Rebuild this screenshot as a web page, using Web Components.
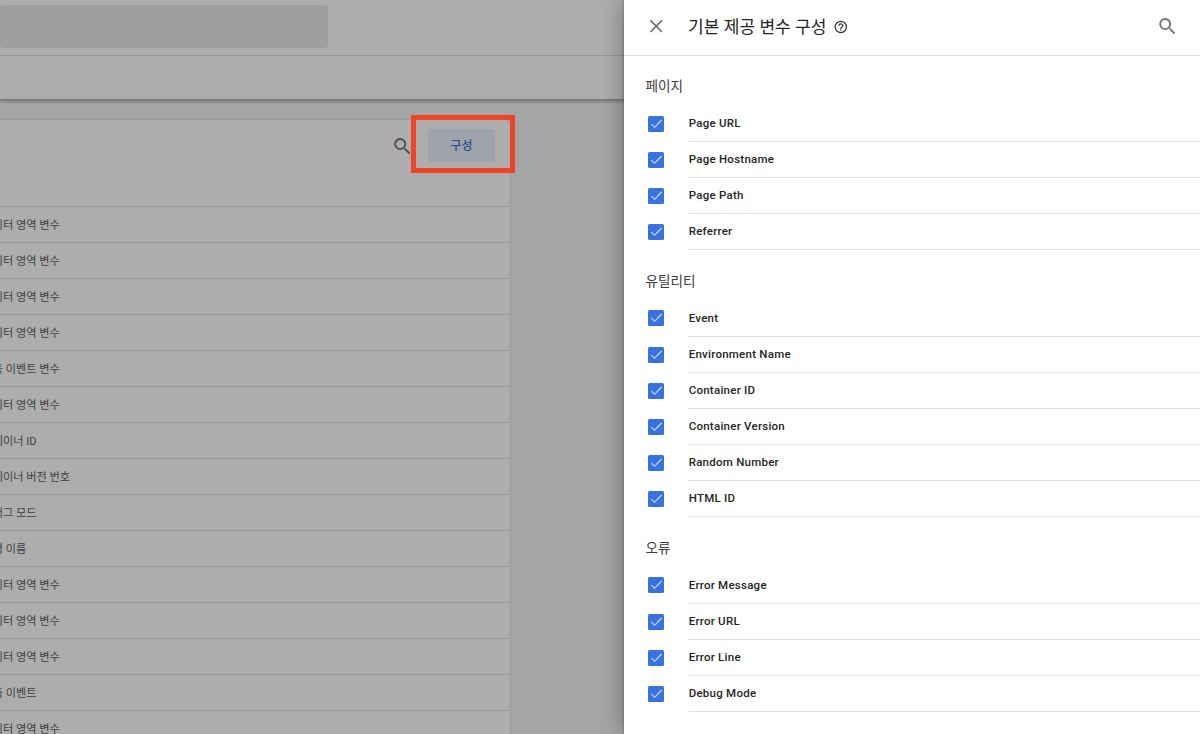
<!DOCTYPE html>
<html lang="ko">
<head>
<meta charset="utf-8">
<title>기본 제공 변수 구성</title>
<style>
html,body{margin:0;height:100%;overflow:hidden}
body{font-family:Roboto,"Noto Sans CJK KR",sans-serif;background:#a3a5a7}
</style>
</head>
<body>
<tag-app></tag-app>
<script>
const define=(name,html,setup)=>{
  const t=document.createElement('template');
  t.innerHTML=html;
  customElements.define(name,class extends HTMLElement{
    constructor(){
      super();
      this.attachShadow({mode:'open'}).append(t.content.cloneNode(true));
      if(setup)setup(this,this.shadowRoot);
    }
  });
};

define('search-icon',`
<style>:host{display:block;width:22px;height:22px}svg{display:block;width:100%;height:100%}</style>
<svg viewBox="-.5 -.4 24 24"><path fill="currentColor" d="M15.5 14h-.79l-.28-.27A6.47 6.47 0 0 0 16 9.5 6.5 6.5 0 1 0 9.5 16c1.61 0 3.09-.59 4.23-1.57l.27.28v.79l5 4.99L20.49 19l-4.99-5zm-6 0a4.5 4.5 0 1 1 0-9 4.5 4.5 0 0 1 0 9z"/></svg>`);

define('close-icon',`
<style>:host{display:block;width:14px;height:14px}svg{display:block}</style>
<svg width="14" height="14" viewBox="-.2 -.2 14 14"><path d="M1.2 1.2l11.6 11.6M12.8 1.2L1.2 12.8" stroke="#6b6b6b" stroke-width="1.6" fill="none"/></svg>`);

define('help-icon',`
<style>:host{display:block;width:15px;height:15px}svg{display:block;width:100%;height:100%}</style>
<svg viewBox="-.5 -.8 24 24"><path fill="#333" d="M11 18h2v-2h-2v2zm1-16a10 10 0 1 0 0 20 10 10 0 0 0 0-20zm0 18a8 8 0 1 1 0-16 8 8 0 0 1 0 16zm0-14a4 4 0 0 0-4 4h2a2 2 0 1 1 4 0c0 2-3 1.75-3 5h2c0-2.25 3-2.5 3-5a4 4 0 0 0-4-4z"/></svg>`);

define('check-box',`
<style>:host{display:block;width:16px;height:16px;border-radius:1.5px;background:#3871e0}svg{display:block}</style>
<svg width="16" height="16" viewBox="0 0 16 16"><path d="M3.4 8.1l3.2 3.2 7-7.3" stroke="#d3e0fa" stroke-width="1.15" fill="none"/></svg>`);

define('variable-option',`
<style>
:host{display:flex;height:36px;box-sizing:border-box;padding-left:24px}
check-box{margin:var(--check-top,10px) 24.7px 0 0}
.label{flex:1;border-bottom:1px solid #dfdfdf;font-size:11.5px;font-weight:500;letter-spacing:.25px;line-height:34px;color:#252525;white-space:nowrap}
</style>
<check-box></check-box><div class="label"><slot></slot></div>`);

define('option-group',`
<style>
:host{display:block}
h3{margin:0;height:var(--heading-height,51px);box-sizing:border-box;padding:var(--heading-top,21px) 0 0 21.5px;font-size:13.6px;line-height:20px;font-weight:400;color:#3c3c3c}
::slotted(.lead){--check-top:9px}
</style>
<h3><slot name="title"></slot></h3><slot></slot>`);

define('side-panel',`
<style>
:host{display:block;width:576px;height:100%;background:#fff;box-shadow:0 0 2px rgba(0,0,0,.35),-2px 0 20px rgba(0,0,0,.3)}
header{display:flex;align-items:center;height:56px;box-sizing:border-box;border-bottom:1px solid #dfdfdf;padding:0 22px 3px 25px}
h2{margin:2px 6px 0 25px;font-size:17.1px;line-height:24px;font-weight:400;color:#252525;white-space:nowrap}
search-icon{margin-left:auto;color:#757575}
</style>
<header><close-icon></close-icon><h2><slot name="title"></slot></h2><help-icon></help-icon><search-icon></search-icon></header>
<slot></slot>`);

define('variable-row',`
<style>
:host{display:block;height:36px;box-sizing:border-box;border-top:1px solid #989898;padding-left:3.4px;font-size:11.15px;line-height:37px;color:#3d3f41;white-space:nowrap}
</style><slot></slot>`);

define('top-bars',`
<style>
:host{display:block;height:99px;position:relative;background:#adadad;box-shadow:0 1px 1px #777a78,0 2px 4px rgba(0,0,0,.36)}
.first{height:56px;box-sizing:border-box;border-bottom:1px solid #989898;padding-top:5px}
.search{width:328px;height:43px;border-radius:4px;background:#9d9fa0}
</style>
<div class="first"><div class="search"></div></div>`);

define('config-button',`
<style>
:host{display:block;position:relative;width:67px;height:33px;border-radius:3px;background:#9fa4ac;color:#2c4c8c;font-size:12px;font-weight:500;line-height:35px;text-align:center}
.mark{position:absolute;left:-17.5px;top:-14px;width:94.5px;height:47.5px;border:5px solid #ee4326}
</style>
<slot></slot><div class="mark"></div>`);

define('variable-card',`
<style>
:host{display:block;width:533px;box-sizing:border-box;margin:20px 0 0 -22px;height:700px;border:1px solid #989a9c;border-radius:0 7px 0 0;background:#adadad}
.bar{display:flex;height:86px;box-sizing:border-box;padding:9px 15px 0 0;justify-content:flex-end}
search-icon{color:#505050;margin:6px 15px 0 0}
</style>
<div class="bar"><search-icon></search-icon><config-button>구성</config-button></div><slot></slot>`);

define('tag-app',`
<style>
:host{display:grid;grid-template-columns:624px 576px;height:734px;overflow:hidden;background:#a3a5a7}
main{min-width:0;height:734px;overflow:hidden}
side-panel{z-index:1}
.first{--heading-height:50px;--heading-top:20px}
</style>
<main><top-bars></top-bars><variable-card></variable-card></main>
<side-panel><span slot="title">기본 제공 변수 구성</span></side-panel>`,
(host,root)=>{
  const add=(parent,tag,text)=>{
    const e=document.createElement(tag);
    if(text)e.textContent=text;
    parent.append(e);
    return e;
  };
  const d='데이터 영역 변수';
  const card=root.querySelector('variable-card');
  [d,d,d,d,'자동 이벤트 변수',d,'컨테이너 ID','컨테이너 버전 번호','디버그 모드','환경 이름',d,d,d,'맞춤 이벤트',d]
    .forEach(t=>add(card,'variable-row',t));
  const panel=root.querySelector('side-panel');
  [['페이지','Page URL','Page Hostname','Page Path','Referrer'],
   ['유틸리티','Event','Environment Name','Container ID','Container Version','Random Number','HTML ID'],
   ['오류','Error Message','Error URL','Error Line','Debug Mode']]
    .forEach(([title,...items],i)=>{
      const g=add(panel,'option-group');
      if(!i)g.className='first';
      add(g,'span',title).slot='title';
      items.forEach((t,j)=>{
        const option=add(g,'variable-option',t);
        if(i&&!j)option.className='lead';
      });
    });
});
</script>
</body>
</html>
